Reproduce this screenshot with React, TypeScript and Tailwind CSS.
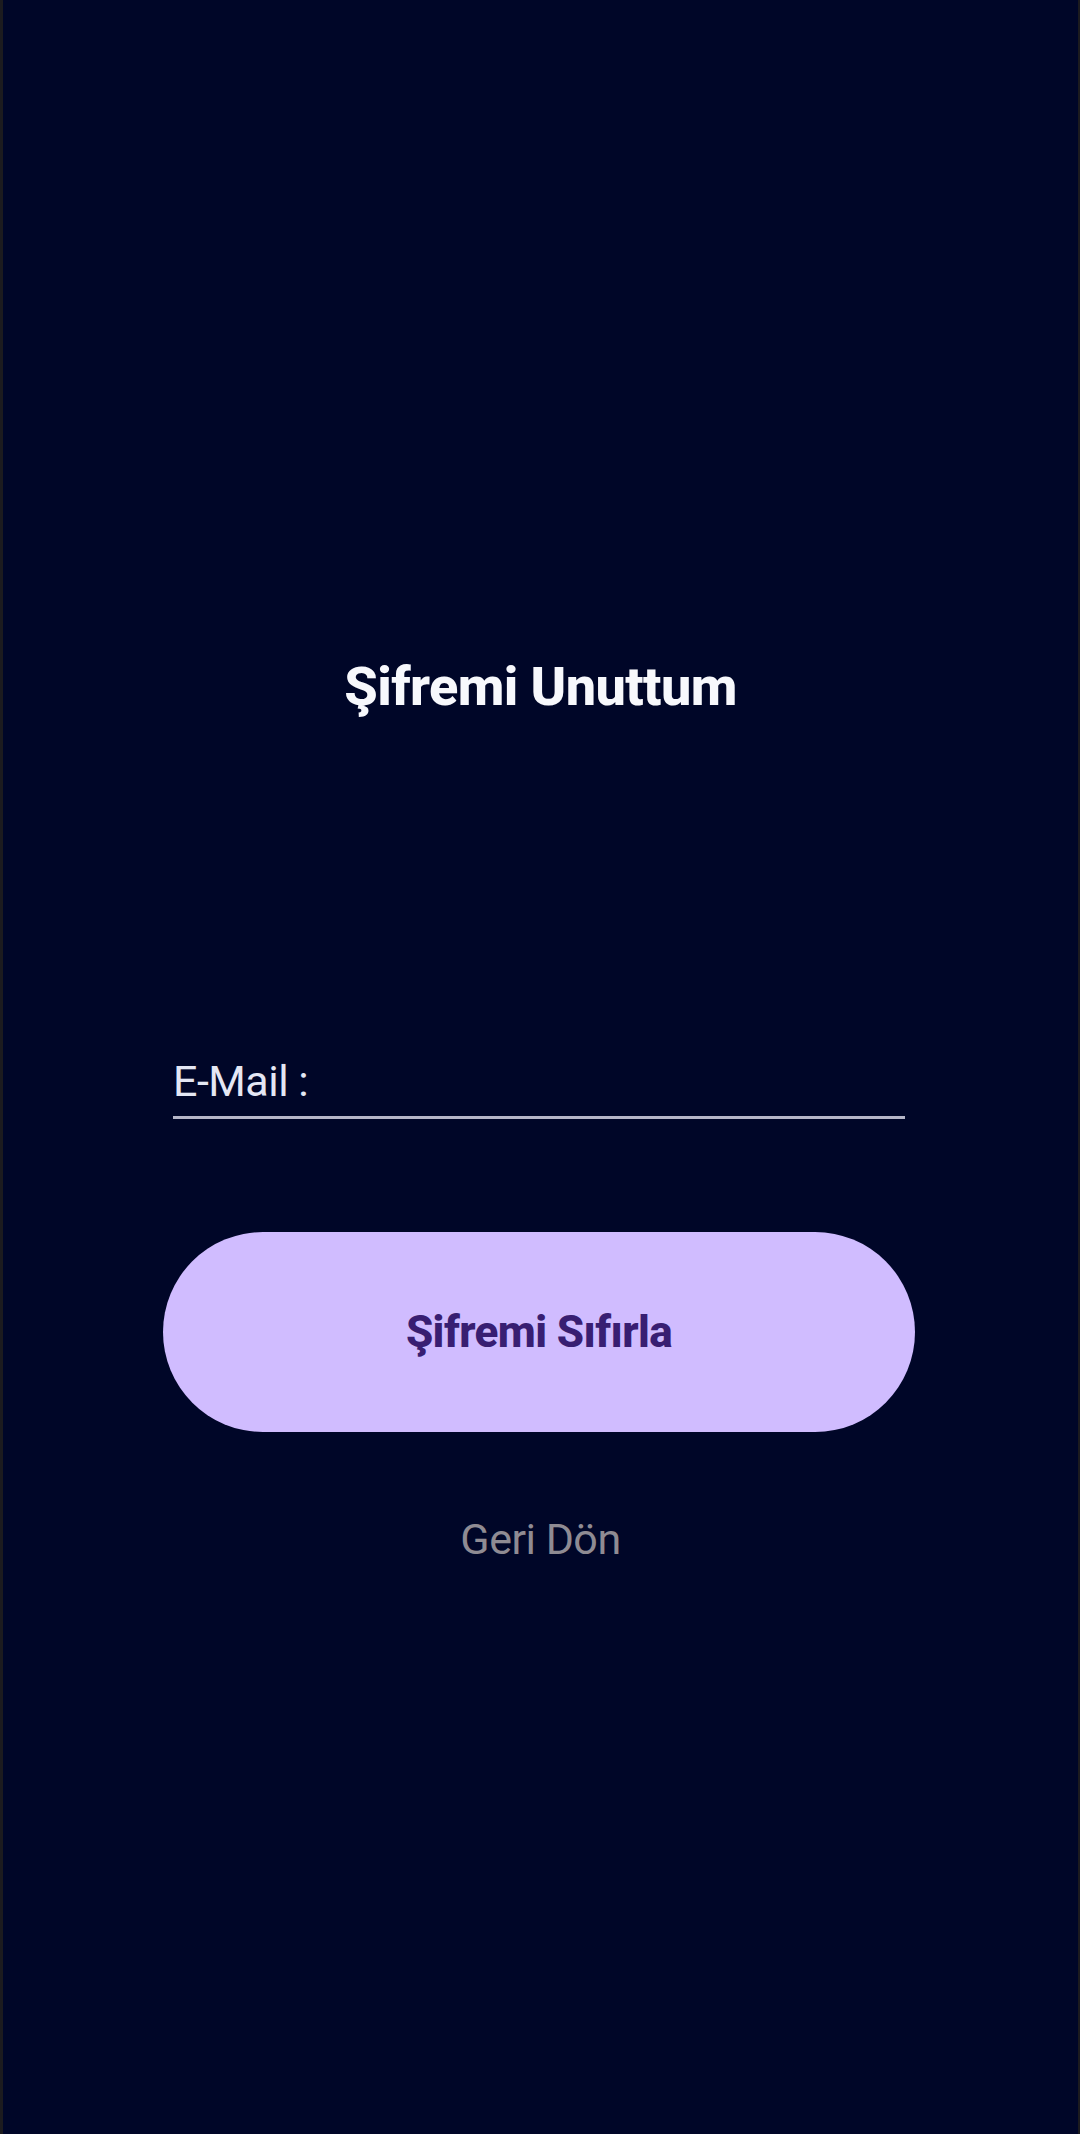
export default function App() {
  return (
    <div
      className="w-[1080px] h-[2134px] bg-[#1c1b1f] flex"
      style={{ fontFamily: 'Roboto, "Noto Sans", sans-serif' }}
    >
      <div className="ml-[3px] mr-[2px] flex-1 bg-[#000628] flex flex-col items-center">
        <h1 className="mt-[657px] text-[54px] leading-[60px] font-extrabold text-[#f7f8fc] tracking-[-0.6px]">
          Şifremi Unuttum
        </h1>
        <div className="mt-[339px] w-[732px] ml-[-3px] flex flex-col">
          <div className="text-[43px] leading-[50px] text-[#e4e7f4] tracking-[-0.5px]">E-Mail :</div>
          <div className="mt-[10px] h-[3px] bg-[#b5b5c8]" />
        </div>
        <button className="mt-[113px] w-[752px] h-[200px] ml-[-3px] rounded-full bg-[#d0bcff] text-[#381e72] text-[44px] font-extrabold tracking-[-0.6px]">
          Şifremi Sıfırla
        </button>
        <div className="mt-[82px] text-[43px] leading-[50px] text-[#8f8b93] tracking-[-0.5px]">Geri Dön</div>
      </div>
    </div>
  );
}
